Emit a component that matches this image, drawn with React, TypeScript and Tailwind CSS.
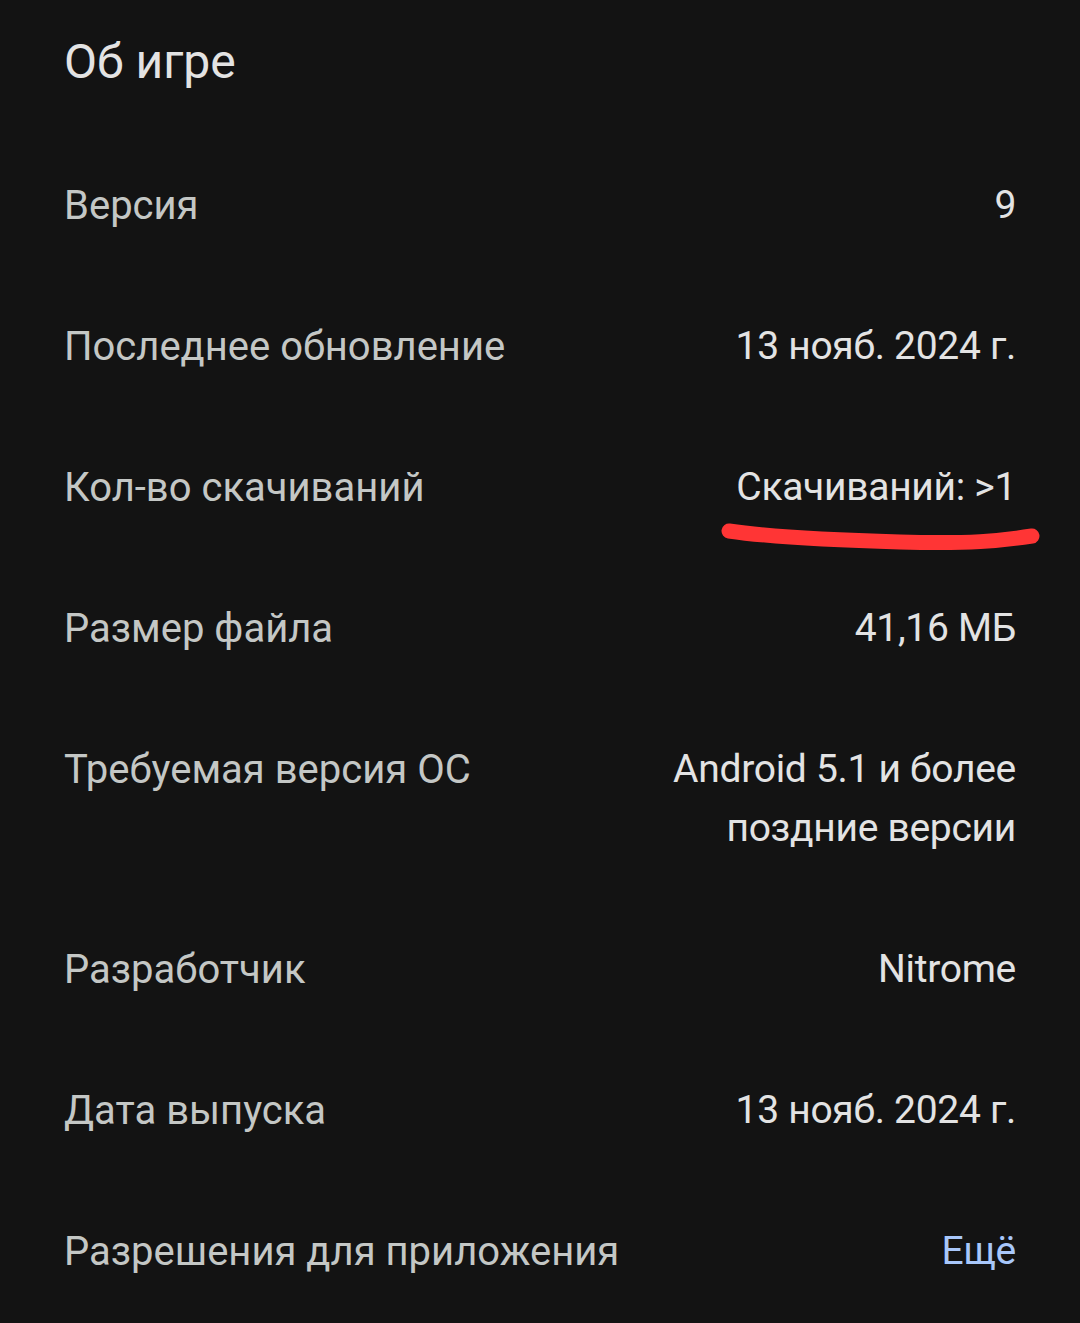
import React from "react";

const rows: { label: string; value: React.ReactNode; blue?: boolean; mark?: boolean }[] = [
  { label: "Версия", value: "9" },
  { label: "Последнее обновление", value: "13 нояб. 2024 г." },
  { label: "Кол-во скачиваний", value: "Скачиваний: >1", mark: true },
  { label: "Размер файла", value: "41,16 МБ" },
  {
    label: "Требуемая версия ОС",
    value: (
      <>
        Android 5.1 и более
        <br />
        поздние версии
      </>
    ),
  },
  { label: "Разработчик", value: "Nitrome" },
  { label: "Дата выпуска", value: "13 нояб. 2024 г." },
  { label: "Разрешения для приложения", value: "Ещё", blue: true },
];

export default function App() {
  return (
    <div
      className="w-[1080px] h-[1323px] bg-[#131313] overflow-hidden"
      style={{ fontFamily: "Roboto, 'Noto Sans', sans-serif" }}
    >
      <div className="h-[135px] pl-[64px] pt-[31px]">
        <h1 className="text-[48px] leading-[62px] text-[#e3e3e3] font-normal">Об игре</h1>
      </div>
      <div className="pl-[64px] pr-[64px]">
        {rows.map((r) => (
          <div key={r.label} className="relative flex justify-between items-start py-[41px]">
            <div className="text-[40px] leading-[59px] text-[#c4c7c5]">{r.label}</div>
            <div
              className={`text-[39px] leading-[59px] text-right tracking-[-0.3px] ${
                r.blue ? "text-[#a8c7fa]" : "text-[#e3e3e3]"
              }`}
            >
              {r.value}
            </div>
            {r.mark && (
              <svg
                className="absolute right-[-34px] top-[100px]"
                width="330"
                height="44"
                viewBox="0 0 330 44"
              >
                <path
                  d="M9 14 C 50 20, 110 23, 180 25 S 280 24, 312 19"
                  stroke="#ff3535"
                  strokeWidth="15"
                  strokeLinecap="round"
                  fill="none"
                />
              </svg>
            )}
          </div>
        ))}
      </div>
    </div>
  );
}
